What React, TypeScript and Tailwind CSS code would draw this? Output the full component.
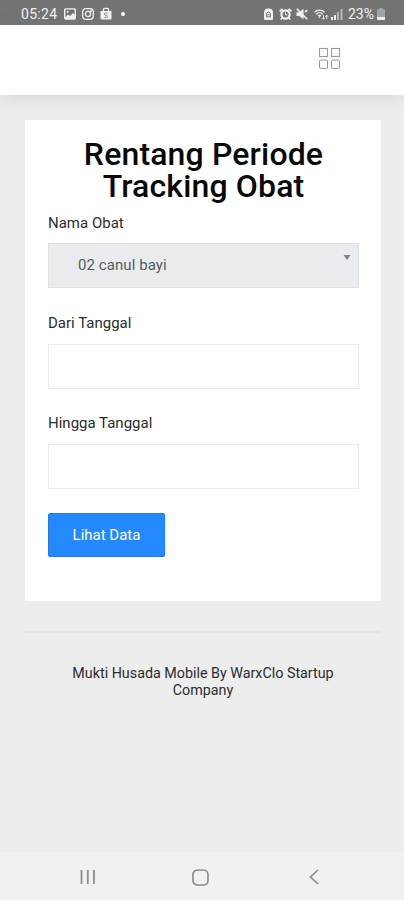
import React from 'react';

const StatusBar = () => (
  <div className="flex h-[25px] shrink-0 items-center bg-[#747474] pt-[2px] pl-[21px] pr-[19px] text-[#f2f2f2]">
    <span className="w-[37px] text-[14px] leading-none tracking-[0.3px] whitespace-nowrap">05:24</span>
    {/* Notification icons */}
    <svg className="ml-[6px] h-3 w-3" viewBox="0 0 12 12" fill="none">
      <rect x="0.7" y="0.9" width="10.6" height="10.2" rx="1" stroke="currentColor" strokeWidth="1.4" />
      <path d="M1 9.5l3-3 2 1.5L9 5l2.5 2.5V11H1z" fill="currentColor" />
      <circle cx="3.6" cy="3.8" r="1" fill="currentColor" />
    </svg>
    <svg className="ml-[6px] h-3 w-3" viewBox="0 0 12 12" fill="none" stroke="currentColor" strokeWidth="1.3">
      <rect x="0.7" y="0.7" width="10.6" height="10.6" rx="3" />
      <circle cx="6" cy="6" r="2.6" />
      <circle cx="9" cy="3" r="0.4" />
    </svg>
    <svg className="ml-[6px] h-[13px] w-3" viewBox="0 0 12 13">
      <path d="M0.5 4h11v7.5a1 1 0 0 1-1 1h-9a1 1 0 0 1-1-1z" fill="currentColor" />
      <path d="M3.5 4V2.3a1 1 0 0 1 1-1h3a1 1 0 0 1 1 1V4" fill="none" stroke="currentColor" strokeWidth="1.3" />
      <path d="M7.5 6H5.4a1 1 0 0 0 0 2.2h1a1 1 0 0 1 0 2.2H4.3" fill="none" stroke="#8a8a8a" strokeWidth="1" />
    </svg>
    <span className="ml-[9px] h-1 w-1 rounded-full bg-white"></span>

    {/* System icons */}
    <div className="ml-auto flex items-center">
      <svg className="h-3 w-[9px]" viewBox="0 0 9 12">
        <path d="M0 4.5C0 2 1.7 0.5 4.5 0.5S9 2 9 4.5V11a1 1 0 0 1-1 1H1a1 1 0 0 1-1-1z" fill="currentColor" />
        <path d="M2.5 8.8V6.2a2 2 0 0 1 4 0v2.6zM3.3 6.8h2.4" fill="none" stroke="#747474" strokeWidth="1" />
      </svg>
      <svg className="ml-[6px] h-3 w-[13px]" viewBox="0 0 13 12" fill="none" stroke="currentColor">
        <circle cx="6.5" cy="6.5" r="4.1" strokeWidth="2.2" />
        <path d="M0.6 3.4L3.5 0.8M12.4 3.4L9.5 0.8M3.2 10l-1.4 1.6M9.8 10l1.4 1.6" strokeWidth="1.8" />
        <path d="M6.5 4.5v2.3h1.8" strokeWidth="1" />
      </svg>
      <svg className="ml-[4px] h-3 w-3" viewBox="0 0 12 12">
        <path d="M0.5 4.2h2.7L7.5 0.8v10.4L3.2 8H0.5z" fill="currentColor" />
        <path d="M0.8 0.8l10.4 10.4M9 4l2.3-1.8" stroke="currentColor" strokeWidth="1.6" />
      </svg>
      <svg className="ml-[6px] h-3 w-[15px]" viewBox="0 0 15 12" fill="none" stroke="currentColor" strokeWidth="1.2">
        <path d="M0.5 4.2a7.2 7.2 0 0 1 10 0M2.3 6.2a4.6 4.6 0 0 1 6.4 0M4 8a2.2 2.2 0 0 1 3 0" />
        <path d="M5.5 8.3v1.7" />
        <path d="M9.5 7.2v4M8.2 9.8l1.3 1.4 1.3-1.4M12.7 11.2v-4M11.4 8.6l1.3-1.4 1.3 1.4" strokeWidth="0.9" />
      </svg>
      <svg className="ml-[2px] h-3 w-3" viewBox="0 0 12 12" fill="currentColor">
        <path d="M0 9h2v3H0zM3 7h2v5H3z" />
        <path d="M6 4h2v8H6zM9.5 1h2v11h-2z" opacity="0.55" />
      </svg>
      <span className="ml-[5px] w-[28px] text-[14px] leading-none whitespace-nowrap">23%</span>
      <svg className="ml-[1px] h-3 w-2" viewBox="0 0 8 12">
        <path d="M2.5 0h3v1.2H7a1 1 0 0 1 1 1V9H0V2.2a1 1 0 0 1 1-1h1.5z" fill="#a5a5a5" />
        <path d="M0 9h8v2a1 1 0 0 1-1 1H1a1 1 0 0 1-1-1z" fill="currentColor" />
      </svg>
    </div>
  </div>
);

const Header = () => (
  <header className="relative flex h-[70px] shrink-0 items-start justify-end bg-white pt-[22px] pr-[63px] shadow-[0_3px_16px_rgba(90,105,130,0.17)]">
    <svg className="h-[23px] w-[23px]" viewBox="0 0 23 23" fill="none" stroke="#9b9b9b" strokeWidth="1.1">
      <rect x="1.5" y="1.5" width="8" height="8" />
      <rect x="13.5" y="1.5" width="8" height="8" />
      <rect x="1.5" y="13" width="8" height="8.5" rx="1.5" />
      <rect x="13.5" y="13" width="8" height="8.5" rx="1.5" />
    </svg>
  </header>
);

const DateField = ({ label }: { label: string }) => (
  <div className="mb-6">
    <label className="block h-[31px] text-[15px] leading-[20px]">{label}</label>
    <input type="text" aria-label={label} className="block h-[45px] w-full border border-[#ebebeb] bg-white px-[30px] text-[15px]" />
  </div>
);

const NavBar = () => (
  <nav className="flex h-12 shrink-0 items-center bg-[#f1f1f1] pt-[2px] pl-[80px] text-[#8c8c8c]">
    <svg className="h-4 w-4" viewBox="0 0 16 16" stroke="currentColor" strokeWidth="1.8">
      <path d="M1.5 1v14M7.8 1v14M14 1v14" />
    </svg>
    <svg className="ml-[96px] h-[17px] w-[17px]" viewBox="0 0 17 17" fill="none" stroke="currentColor" strokeWidth="1.7">
      <rect x="1" y="1" width="15" height="15" rx="4.5" />
    </svg>
    <svg className="ml-[99px] h-4 w-[12px]" viewBox="0 0 12 16" fill="none" stroke="currentColor" strokeWidth="1.7">
      <path d="M10 1L2.5 8l7.5 7" />
    </svg>
  </nav>
);

export default function App() {
  return (
    <div className="flex h-[900px] w-full flex-col overflow-hidden bg-[#ededed] font-['Roboto',sans-serif] text-[#2c2c2c]">
      <StatusBar />
      <Header />

      <main className="flex-1 pt-[25px] pr-[23px] pl-[25px]">
        <section className="h-[481px] bg-white pt-[18px] pr-[22px] pl-[23px]">
          <h1 className="text-center text-[32px] leading-[32px] font-medium tracking-[0.15px] text-[#080808]">
            Rentang Periode Tracking Obat
          </h1>

          <div className="mt-[11px] mb-[25px]">
            <label className="block h-[30px] text-[15px] leading-[20px]">Nama Obat</label>
            <div className="flex h-[45px] justify-between border border-[#dde1e4] bg-[#e8ecef] pr-[7px] pl-[29px]">
              <span className="text-[15px] leading-[43px] tracking-[0.08px] text-[#555b60]">02 canul bayi</span>
              <svg className="mt-[11px] h-[5px] w-2" viewBox="0 0 8 5">
                <path d="M0.5 0h7L4 5z" fill="#7d8286" />
              </svg>
            </div>
          </div>

          <DateField label="Dari Tanggal" />
          <DateField label="Hingga Tanggal" />

          <button className="h-[44px] w-[117px] rounded-[2px] border border-[#1a7df5] bg-[#2489ff] text-[15px] text-white">
            Lihat Data
          </button>
        </section>

        <hr className="mt-[30px] border-t-2 border-[#e6e6e6]" />

        <footer className="mt-[32px] text-center text-[14.3px] leading-[17px]">
          Mukti Husada Mobile By WarxClo Startup
          <br />
          Company
        </footer>
      </main>

      <NavBar />
    </div>
  );
}
